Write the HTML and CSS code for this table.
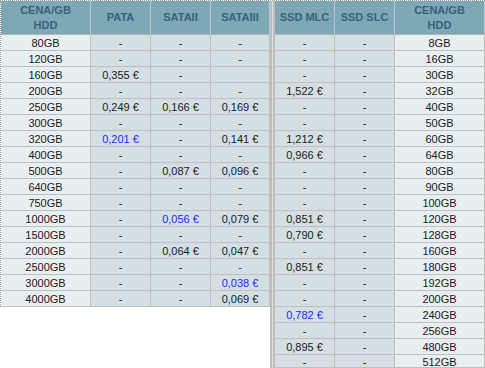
FILE: index.html
```html
<!DOCTYPE html>
<html lang="cs">
<head>
<meta charset="utf-8">
<title>Cena za GB</title>
<link rel="stylesheet" href="styles.css">
</head>
<body>
<div class="page">
  <div class="sheet sheet-left">
    <div class="th">CENA/GB<br>HDD</div><div class="th">PATA</div><div class="th">SATAII</div><div class="th">SATAIII</div>
    <div class="sz">80GB</div><div class="td">-</div><div class="td">-</div><div class="td">-</div>
    <div class="sz">120GB</div><div class="td">-</div><div class="td">-</div><div class="td">-</div>
    <div class="sz">160GB</div><div class="td">0,355 €</div><div class="td">-</div><div class="td"></div>
    <div class="sz">200GB</div><div class="td">-</div><div class="td">-</div><div class="td">-</div>
    <div class="sz">250GB</div><div class="td">0,249 €</div><div class="td">0,166 €</div><div class="td">0,169 €</div>
    <div class="sz">300GB</div><div class="td">-</div><div class="td">-</div><div class="td">-</div>
    <div class="sz">320GB</div><div class="td best">0,201 €</div><div class="td">-</div><div class="td">0,141 €</div>
    <div class="sz">400GB</div><div class="td">-</div><div class="td">-</div><div class="td">-</div>
    <div class="sz">500GB</div><div class="td">-</div><div class="td">0,087 €</div><div class="td">0,096 €</div>
    <div class="sz">640GB</div><div class="td">-</div><div class="td">-</div><div class="td">-</div>
    <div class="sz">750GB</div><div class="td">-</div><div class="td">-</div><div class="td">-</div>
    <div class="sz">1000GB</div><div class="td">-</div><div class="td best">0,056 €</div><div class="td">0,079 €</div>
    <div class="sz">1500GB</div><div class="td">-</div><div class="td">-</div><div class="td">-</div>
    <div class="sz">2000GB</div><div class="td">-</div><div class="td">0,064 €</div><div class="td">0,047 €</div>
    <div class="sz">2500GB</div><div class="td">-</div><div class="td">-</div><div class="td best">-</div>
    <div class="sz">3000GB</div><div class="td">-</div><div class="td">-</div><div class="td best">0,038 €</div>
    <div class="sz">4000GB</div><div class="td">-</div><div class="td">-</div><div class="td">0,069 €</div>
  </div>
  <div class="sep"></div>
  <div class="sheet sheet-right">
    <div class="th">SSD MLC</div><div class="th">SSD SLC</div><div class="th">CENA/GB<br>HDD</div>
    <div class="td">-</div><div class="td">-</div><div class="sz">8GB</div>
    <div class="td">-</div><div class="td">-</div><div class="sz">16GB</div>
    <div class="td">-</div><div class="td">-</div><div class="sz">30GB</div>
    <div class="td">1,522 €</div><div class="td">-</div><div class="sz">32GB</div>
    <div class="td">-</div><div class="td">-</div><div class="sz">40GB</div>
    <div class="td">-</div><div class="td">-</div><div class="sz">50GB</div>
    <div class="td">1,212 €</div><div class="td">-</div><div class="sz">60GB</div>
    <div class="td">0,966 €</div><div class="td">-</div><div class="sz">64GB</div>
    <div class="td">-</div><div class="td">-</div><div class="sz">80GB</div>
    <div class="td">-</div><div class="td">-</div><div class="sz">90GB</div>
    <div class="td">-</div><div class="td">-</div><div class="sz">100GB</div>
    <div class="td">0,851 €</div><div class="td">-</div><div class="sz">120GB</div>
    <div class="td">0,790 €</div><div class="td">-</div><div class="sz">128GB</div>
    <div class="td">-</div><div class="td">-</div><div class="sz">160GB</div>
    <div class="td">0,851 €</div><div class="td">-</div><div class="sz">180GB</div>
    <div class="td">-</div><div class="td">-</div><div class="sz">192GB</div>
    <div class="td">-</div><div class="td">-</div><div class="sz">200GB</div>
    <div class="td best">0,782 €</div><div class="td">-</div><div class="sz">240GB</div>
    <div class="td">-</div><div class="td">-</div><div class="sz">256GB</div>
    <div class="td">0,895 €</div><div class="td">-</div><div class="sz">480GB</div>
    <div class="td last">-</div><div class="td last">-</div><div class="sz last">512GB</div>
  </div>
</div>
</body>
</html>
```

FILE: styles.css
```css
html, body {
  margin: 0;
  padding: 0;
  background: #ffffff;
}

body {
  font-family: "Liberation Sans", Arial, sans-serif;
  font-size: 11px;
  color: #1a1a1a;
}

.page {
  display: flex;
  width: 485px;
  height: 367px;
  border-top: 1px dotted #9a9a9a;
}

.sheet {
  display: grid;
  grid-template-rows: 34px;
  grid-auto-rows: 16px;
  align-self: flex-start;
}

.sheet-left {
  grid-template-columns: 90px 60px 60px 59px;
  border-left: 1px dotted #9a9a9a;
}

.sheet-right {
  grid-template-columns: 60px 60px 90px;
}

.th, .td, .sz {
  box-sizing: border-box;
  border-right: 1px solid #bfbfbf;
  border-bottom: 1px solid #bfbfbf;
  text-align: center;
  white-space: nowrap;
  overflow: hidden;
}

.th {
  display: flex;
  align-items: center;
  justify-content: center;
  background: #7fa8b7;
  color: #386277;
  font-weight: bold;
  line-height: 15px;
  border-right-color: #b9c6cb;
  border-bottom-color: #b5b5b5;
}

.td, .sz {
  line-height: 14px;
  padding-top: 1px;
}

.td {
  background: #d3dfe3;
}

.sz {
  background: #e7eff1;
}

.best {
  color: #1f1fff;
}

.last {
  height: 13px;
  line-height: 12px;
}

.sep {
  width: 5px;
  flex: none;
  background: linear-gradient(to right, #bdbdbd 0 2px, #dedede 2px 3px, #bdbdbd 3px 5px);
}
```
